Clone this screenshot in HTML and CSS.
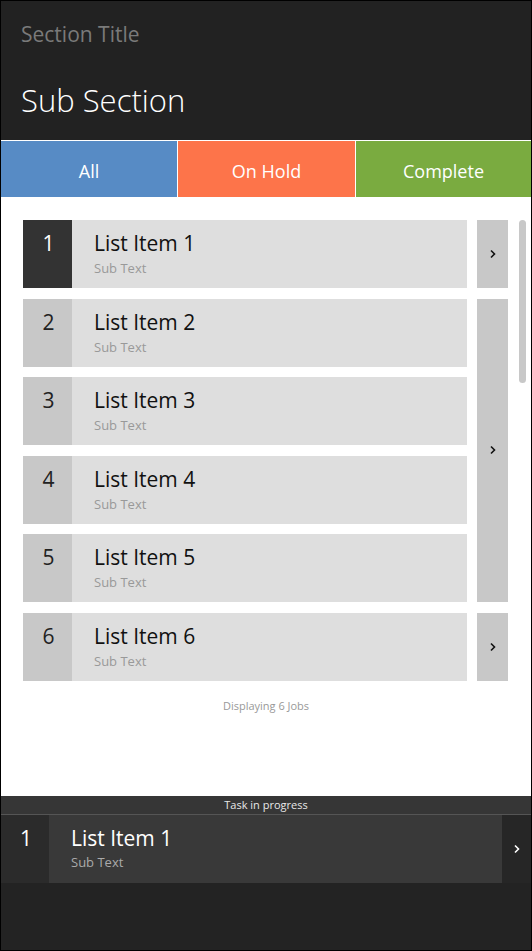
FILE: index.html
```html
<!DOCTYPE html>
<html>
<head>
<meta charset="utf-8">
<link rel="stylesheet" href="styles.css">
</head>
<body>
<div class="app">
  <header class="header">
    <div class="section-title">Section Title</div>
    <div class="sub-section">Sub Section</div>
  </header>
  <nav class="tabs">
    <div class="tab tab-all active">All</div>
    <div class="tab tab-hold">On Hold</div>
    <div class="tab tab-complete">Complete</div>
  </nav>
  <main class="main">
    <div class="list">
      <div class="item" style="grid-row:1"><div class="num dark">1</div><div class="text"><div class="title">List Item 1</div><div class="sub">Sub Text</div></div></div>
      <div class="item" style="grid-row:2"><div class="num">2</div><div class="text"><div class="title">List Item 2</div><div class="sub">Sub Text</div></div></div>
      <div class="item" style="grid-row:3"><div class="num">3</div><div class="text"><div class="title">List Item 3</div><div class="sub">Sub Text</div></div></div>
      <div class="item" style="grid-row:4"><div class="num">4</div><div class="text"><div class="title">List Item 4</div><div class="sub">Sub Text</div></div></div>
      <div class="item" style="grid-row:5"><div class="num">5</div><div class="text"><div class="title">List Item 5</div><div class="sub">Sub Text</div></div></div>
      <div class="item" style="grid-row:6"><div class="num">6</div><div class="text"><div class="title">List Item 6</div><div class="sub">Sub Text</div></div></div>
      <div class="btn" style="grid-row:1"><svg width="8" height="10" viewBox="0 0 8 10"><polyline points="2,1.5 5.5,5 2,8.5" fill="none" stroke="#111" stroke-width="1.6"/></svg></div>
      <div class="btn" style="grid-row:2 / 6"><svg width="8" height="10" viewBox="0 0 8 10"><polyline points="2,1.5 5.5,5 2,8.5" fill="none" stroke="#111" stroke-width="1.6"/></svg></div>
      <div class="btn" style="grid-row:6"><svg width="8" height="10" viewBox="0 0 8 10"><polyline points="2,1.5 5.5,5 2,8.5" fill="none" stroke="#111" stroke-width="1.6"/></svg></div>
    </div>
    <div class="count">Displaying 6 Jobs</div>
    <div class="scrollbar"></div>
  </main>
  <footer class="footer">
    <div class="task-label">Task in progress</div>
    <div class="task-row">
      <div class="task-num">1</div>
      <div class="task-text"><div class="task-title">List Item 1</div><div class="task-sub">Sub Text</div></div>
      <div class="task-btn"><svg width="8" height="10" viewBox="0 0 8 10"><polyline points="2,1.5 5.5,5 2,8.5" fill="none" stroke="#fff" stroke-width="1.6"/></svg></div>
    </div>
    <div class="footer-rest"></div>
  </footer>
</div>
</body>
</html>
```
FILE: styles.css
```css
* { box-sizing: border-box; }
html, body { margin: 0; padding: 0; background: #000; }
body { font-family: "Open Sans", "Noto Sans", sans-serif; }
.app {
  width: 532px;
  height: 951px;
  border: 1px solid #000;
  display: flex;
  flex-direction: column;
  background: #fff;
  overflow: hidden;
}
.header {
  height: 139px;
  background: #222;
  padding: 0 20px;
  flex: none;
}
.section-title {
  margin-top: 18px;
  font-size: 21px;
  line-height: 30px;
  color: #7a7a7a;
}
.sub-section {
  margin-top: 31px;
  font-size: 31px;
  line-height: 40px;
  color: #fff;
  font-weight: 300;
}
.tabs {
  flex: none;
  display: grid;
  grid-template-columns: 176px 177px 1fr;
  column-gap: 1px;
  padding-top: 1px;
  background: #fff;
  height: 57px;
}
.tab {
  position: relative;
  display: flex;
  align-items: center;
  justify-content: center;
  padding-top: 4px;
  color: #fff;
  font-size: 18px;
}
.tab-all { background: #578bc5; }
.tab-hold { background: #fd744a; }
.tab-complete { background: #7aab40; }
.tab.active::after {
  content: "";
  position: absolute;
  left: 50%;
  bottom: -10px;
  margin-left: -11px;
  border-left: 11px solid transparent;
  border-right: 11px solid transparent;
  border-top: 10px solid #578bc5;
}
.main {
  flex: 1;
  position: relative;
  padding: 23px 0 0 22px;
  background: #fff;
}
.list {
  display: grid;
  grid-template-columns: 444px 31px;
  grid-auto-rows: 68px;
  column-gap: 10px;
  row-gap: 10.6px;
}
.item {
  grid-column: 1;
  display: flex;
  background: #dedede;
}
.num {
  width: 49px;
  flex: none;
  background: #c8c8c8;
  color: #222;
  font-size: 21px;
  line-height: 30px;
  padding: 8px 0 0 2px;
  text-align: center;
}
.num.dark { background: #333; color: #fff; }
.text { padding: 8px 0 0 22px; }
.title {
  font-size: 21px;
  line-height: 30px;
  color: #111;
}
.sub {
  margin-top: 1px;
  font-size: 13px;
  line-height: 18px;
  color: #999;
}
.btn {
  grid-column: 2;
  background: #c8c8c8;
  display: flex;
  align-items: center;
  justify-content: center;
}
.btn svg { display: block; }
.count {
  width: 486px;
  text-align: center;
  margin-top: 18px;
  font-size: 11px;
  line-height: 14px;
  color: #999;
}
.scrollbar {
  position: absolute;
  top: 23px;
  left: 518px;
  width: 7px;
  height: 163px;
  border-radius: 4px;
  background: #c8c8c8;
}
.footer {
  flex: none;
  height: 154px;
  background: #232323;
  display: flex;
  flex-direction: column;
}
.task-label {
  height: 19px;
  background: #363636;
  border-bottom: 1px solid #555;
  color: #e8e8e8;
  font-size: 11px;
  line-height: 18px;
  text-align: center;
}
.task-row {
  display: flex;
  height: 68px;
}
.task-num {
  width: 48px;
  background: #2b2b2b;
  color: #fff;
  font-size: 21px;
  line-height: 30px;
  padding: 8px 0 0 2px;
  text-align: center;
}
.task-text {
  flex: 1;
  background: #393939;
  padding: 8px 0 0 22px;
}
.task-title {
  font-size: 21px;
  line-height: 30px;
  color: #fff;
}
.task-sub {
  font-size: 13px;
  line-height: 18px;
  color: #aaa;
}
.task-btn {
  width: 29px;
  background: #262626;
  display: flex;
  align-items: center;
  justify-content: center;
}
.footer-rest { flex: 1; background: #232323; }
```
